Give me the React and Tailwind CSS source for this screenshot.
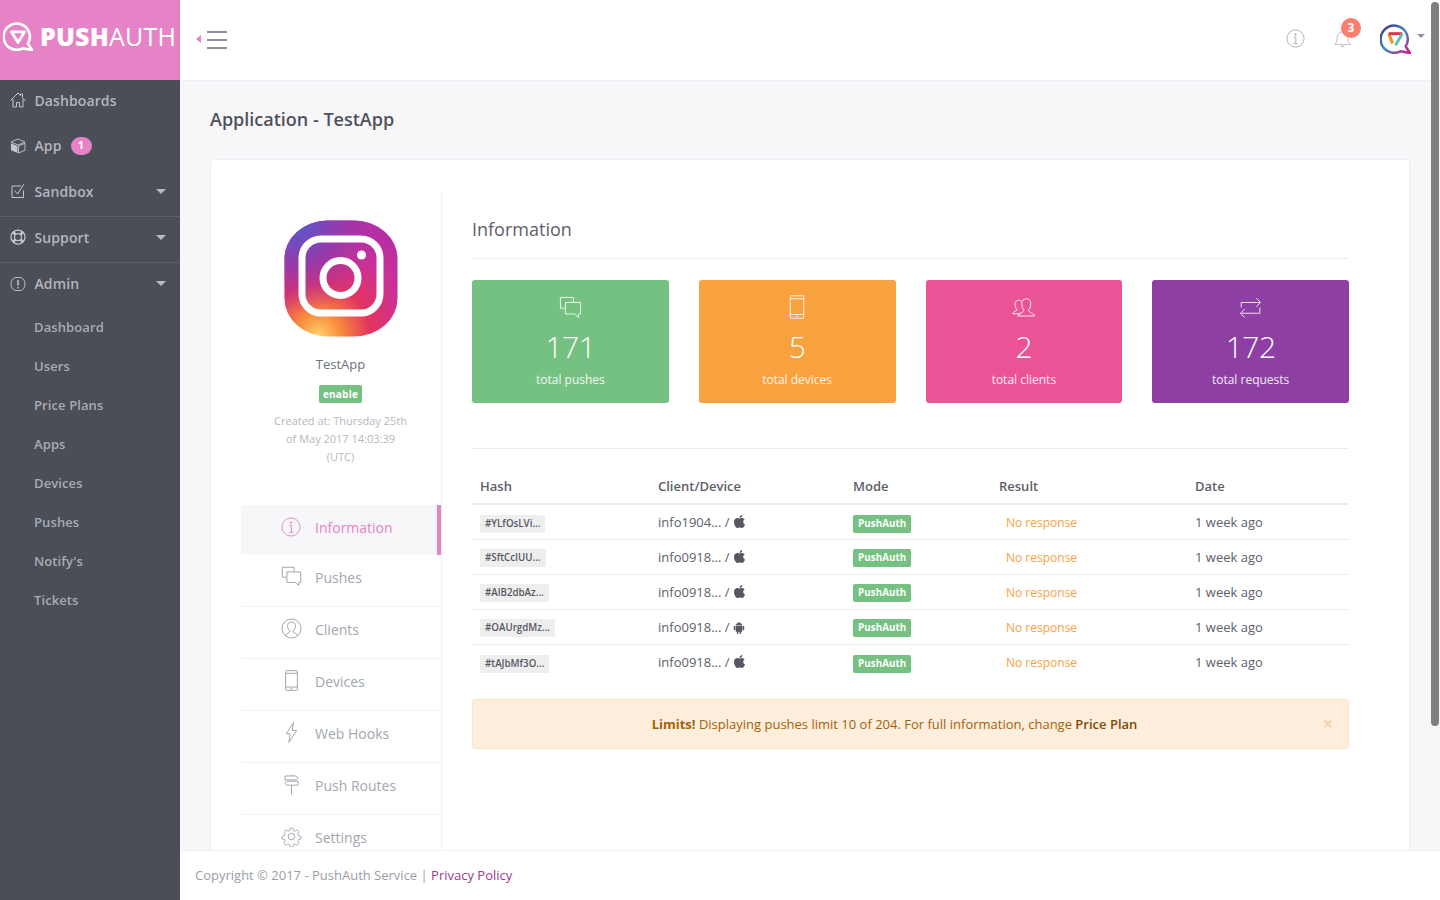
import { FaApple } from 'react-icons/fa';
import { AiFillAndroid } from 'react-icons/ai';

const Line = ({ children, size = 20, className = '', stroke = 1.5 }) => (
  <svg width={size} height={size} viewBox="0 0 32 32" fill="none" stroke="currentColor" strokeWidth={stroke} className={className}>
    {children}
  </svg>
);

const IconHome = (p) => (
  <Line {...p}><path d="M1 17 16 2l5 5V4h4v8l6 5" /><path d="M6 14v16h7v-9h6v9h7V14" /></Line>
);
const IconBox = (p) => (
  <svg width={p.size || 16} height={p.size || 16} viewBox="0 0 32 32" className={p.className}>
    <path d="M16 2 30 8 16 14 2 8z" fill="none" stroke="currentColor" strokeWidth="1.8" />
    <path d="M2 10.500 15 16v14L2 24.500z" fill="currentColor" />
    <path d="M30 10.500 17 16v14l13-5.500z" fill="none" stroke="currentColor" strokeWidth="1.8" />
  </svg>
);
const IconCheck = (p) => (
  <Line {...p}><path d="M27 15v14H4V6h18" /><path d="m9 15 6 7L28 2" /></Line>
);
const IconSupport = (p) => (
  <Line {...p}><circle cx="16" cy="16" r="14" strokeWidth="2.500" /><circle cx="16" cy="16" r="7" strokeWidth="2.500" /><path d="m6 6 5 5M26 6l-5 5M6 26l5-5M26 26l-5-5" strokeWidth="5" /></Line>
);
const IconAlert = (p) => (
  <Line {...p}><path d="M10 3C5 5 2 10 2 16s3 11 8 13h12c5-2 8-7 8-13S27 5 22 3z" strokeWidth="1.800" /><path d="M16 8v11" strokeWidth="3" /><path d="M16 22v3" strokeWidth="3" /></Line>
);
const IconInfo = (p) => (
  <Line {...p}><circle cx="16" cy="16" r="14.500" /><circle cx="16" cy="9" r="1.200" fill="currentColor" /><path d="M13 13.500h3.500V24M12.500 24.500h7.500" /></Line>
);
const IconChats = (p) => (
  <Line {...p}><path d="M20 9V2H2v15h7" /><path d="M9 9h21v16h-3v5l-5-5H9z" /></Line>
);
const IconUserCircle = (p) => (
  <Line {...p}><circle cx="16" cy="16" r="14.500" /><path d="M7 27c0-4 7-4 7-7-3-2-4-5-4-8 0-4 3-6 6-6s6 2 6 6c0 3-1 6-4 8 0 3 7 3 7 7" /></Line>
);
const IconPhone = (p) => (
  <Line {...p}><rect x="7" y="1" width="18" height="30" rx="1" /><path d="M7 5h18M7 26h18M14.500 28.500h3" /></Line>
);
const IconBolt = (p) => (
  <Line {...p}><path d="M19 1 8 18h6l-2 13 12-18h-7z" /></Line>
);
const IconSign = (p) => (
  <Line {...p}><path d="M6 3h17l3 3-3 3H6zM26 11H9l-3 3 3 3h17zM16 3V1M16 17v14" /></Line>
);
const IconGear = (p) => (
  <Line {...p}>
    <circle cx="16" cy="16" r="5" />
    <path d="M13.500 2h5l.8 4 2.700 1.200 3.500-2.300 3.500 3.500-2.300 3.500 1.200 2.700 4 .8v5l-4 .8-1.200 2.700 2.300 3.500-3.500 3.500-3.500-2.300-2.700 1.200-.8 4h-5l-.8-4-2.700-1.200-3.500 2.300-3.500-3.500 2.300-3.500-1.200-2.700-4-.8v-5l4-.8 1.200-2.700-2.300-3.500 3.500-3.500 3.500 2.300 2.700-1.200z" transform="translate(1.600 1.600) scale(.9)" />
  </Line>
);
const IconUsers = (p) => (
  <Line {...p}>
    <path d="M11 25H1c0-3 4-3 6-5-2-2-3-5-3-8 0-3 2-5 5-5 1 0 2 .3 3 1" />
    <path d="M8 28c0-4 8-4 8-8-2-2-3-5-3-9 0-4 3-6 6-6s6 2 6 6c0 4-1 7-3 9 0 4 8 4 8 8z" />
  </Line>
);
const IconRepeat = (p) => (
  <Line {...p}><path d="M3 16V9h26M24 3l6 6-6 6M29 16v8H3M8 18l-6 6 6 6" /></Line>
);
const IconBell = (p) => (
  <Line {...p}><path d="M3 26c3-3 4-6 4-12 0-6 4-9 9-9s9 3 9 9c0 6 1 9 4 12z" /><path d="M13 28c0 2 6 2 6 0" fill="currentColor" /></Line>
);

const Caret = ({ className = '' }) => (
  <span className={`w-0 h-0 border-x-[4px] border-x-transparent border-t-[4px] ${className}`} />
);

const bubble = 'M21 29.200 31 31 26.500 24.200A14 14 0 1 0 21 29.200Z';

const LogoMark = () => (
  <svg width="30" height="30" viewBox="0 0 32 32" fill="none" stroke="#fff">
    <path d={bubble} strokeWidth="2.800" strokeLinejoin="round" />
    <path d="M9 11.500h14L16 23z" strokeWidth="3" strokeLinejoin="round" />
  </svg>
);

const UserLogo = () => (
  <svg width="31" height="31" viewBox="0 0 32 32" fill="none">
    <defs>
      <linearGradient id="ul" x1="0" y1="0" x2="1" y2="1">
        <stop offset="0" stopColor="#3b2a87" />
        <stop offset=".5" stopColor="#3f8fc4" />
        <stop offset=".75" stopColor="#8e4ca0" />
        <stop offset="1" stopColor="#e0178a" />
      </linearGradient>
    </defs>
    <path d={bubble} stroke="url(#ul)" strokeWidth="2.600" strokeLinejoin="round" />
    <path d="M9 11 13 21" stroke="#f58c1f" strokeWidth="3" />
    <path d="M9 11h14" stroke="#e0304f" strokeWidth="3" />
    <path d="M23 11 16 23" stroke="#55c4b5" strokeWidth="3" />
  </svg>
);

const InstagramIcon = () => (
  <svg width="114" height="118" viewBox="0 0 114 118">
    <defs>
      <radialGradient id="ig1" cx="0.3" cy="1" r="1.1">
        <stop offset="0" stopColor="#fdd46f" />
        <stop offset=".18" stopColor="#f98d3c" />
        <stop offset=".42" stopColor="#e3335f" />
        <stop offset=".7" stopColor="#cc3195" />
        <stop offset="1" stopColor="#b32da6" />
      </radialGradient>
      <radialGradient id="ig2" cx="0.1" cy="0" r="0.8">
        <stop offset="0" stopColor="#4e5fd0" />
        <stop offset=".5" stopColor="#8a3cb0" stopOpacity=".8" />
        <stop offset="1" stopColor="#b32da6" stopOpacity="0" />
      </radialGradient>
    </defs>
    <rect x="0.500" y="0.500" width="113" height="116" rx="43" ry="38" fill="url(#ig1)" />
    <rect x="0.500" y="0.500" width="113" height="116" rx="43" ry="38" fill="url(#ig2)" />
    <rect x="18" y="19" width="78" height="74" rx="19" fill="none" stroke="#fff" strokeWidth="7" />
    <circle cx="56.500" cy="58" r="17.500" fill="none" stroke="#fff" strokeWidth="7" />
    <circle cx="77.500" cy="35" r="4.500" fill="#fff" />
  </svg>
);

const subItems = ['Dashboard', 'Users', 'Price Plans', 'Apps', 'Devices', 'Pushes', "Notify's", 'Tickets'];

const SideItem = ({ icon, label, badge, caret, border, short }) => (
  <div className={`flex items-center pl-[10px] pr-[15px] pb-[5px] ${short ? 'h-[45px]' : 'h-[46px]'} ${border ? 'border-b border-[#5b5f69]' : ''}`}>
    <span className="w-[24.500px] flex text-[#c4c6cb]">{icon}</span>
    <span className="text-[14px] font-semibold tracking-[0.1px] text-[#b4b6bd]">{label}</span>
    {badge && (
      <span className="ml-[9px] w-[21px] h-[18px] rounded-full bg-[#e683c6] text-white text-[11px] font-bold flex items-center justify-center">{badge}</span>
    )}
    {caret && <Caret className="ml-auto mr-[-1px] border-t-[#b9bbc1] border-x-[5px] border-t-[5px]" />}
  </div>
);

const Sidebar = () => (
  <aside className="w-[180px] shrink-0 flex flex-col bg-[#4a4e57]">
    <div className="h-[80px] bg-[#e683c6] flex items-center pl-[3px] pb-[8px] shrink-0">
      <LogoMark />
      <span className="ml-[7px] text-[25px] text-white tracking-[0.2px] leading-none">
        <span className="font-extrabold">PUSH</span>AUTH
      </span>
    </div>
    <nav className="flex flex-col">
      <SideItem short icon={<IconHome size={16} stroke={2} />} label="Dashboards" />
      <SideItem icon={<IconBox size={16} />} label="App" badge="1" />
      <SideItem icon={<IconCheck size={16} stroke={2} />} label="Sandbox" caret border />
      <SideItem icon={<IconSupport size={16} />} label="Support" caret border />
      <SideItem icon={<IconAlert size={16} />} label="Admin" caret />
      <ul className="mt-[-1px]">
        {subItems.map((s) => (
          <li key={s} className="h-[39px] pl-[34px] flex items-center text-[13px] font-semibold tracking-[0.1px] text-[#a9abb2]">{s}</li>
        ))}
      </ul>
    </nav>
  </aside>
);

const Header = () => (
  <header className="h-[81px] shrink-0 bg-white border-b border-[#f0f0f4] flex items-center pl-[16px] pr-[15px]">
    <span className="w-0 h-0 border-y-[4px] border-y-transparent border-r-[5px] border-r-[#e683c6] mr-[6px] mt-[-2px]" />
    <div className="flex flex-col gap-[6px] w-[20px]">
      <span className="h-[2px] bg-[#8e919b]" />
      <span className="h-[2px] bg-[#8e919b]" />
      <span className="h-[2px] bg-[#8e919b]" />
    </div>
    <div className="ml-auto flex items-center pb-[4px]">
      <IconInfo size={19} className="text-[#a9abb4]" />
      <div className="relative ml-[28px] mr-[28px] flex">
        <IconBell size={19} className="text-[#b7b9c0]" />
        <span className="absolute top-[-11px] left-[8px] w-[20px] h-[20px] rounded-full bg-[#fb7d6c] text-white text-[12px] font-bold flex items-center justify-center">3</span>
      </div>
      <UserLogo />
      <Caret className="ml-[6px] mt-[-4px] border-t-[#8e919b]" />
    </div>
  </header>
);

const sideLinks = [
  { label: 'Pushes', Icon: IconChats },
  { label: 'Clients', Icon: IconUserCircle },
  { label: 'Devices', Icon: IconPhone },
  { label: 'Web Hooks', Icon: IconBolt },
  { label: 'Push Routes', Icon: IconSign },
  { label: 'Settings', Icon: IconGear },
];

const ProfileColumn = () => (
  <div className="w-[201px] shrink-0 border-r border-[#f0f0f4] pt-[30px]">
    <div className="flex flex-col items-center pr-[1px]">
      <InstagramIcon />
      <p className="mt-[17px] text-[13px] leading-[18px] text-[#6f727d]">TestApp</p>
      <span className="mt-[12px] h-[18px] px-[4px] rounded-[2px] bg-[#75c181] text-white text-[10px] font-bold tracking-[0.2px] leading-[18px]">enable</span>
      <p className="mt-[9px] w-[135px] text-center text-[11px] leading-[18px] text-[#b5b7c0]">Created at: Thursday 25th of May 2017 14:03:39 (UTC)</p>
    </div>
    <div className="mt-[39px]">
      <div className="h-[50px] bg-[#f7f7fa] border-r-4 border-[#e683c6] flex items-center pl-[40px] pb-[6px] text-[#e683c6]">
        <IconInfo size={20} />
        <span className="ml-[14px] text-[14px]">Information</span>
      </div>
      {sideLinks.map(({ label, Icon }) => (
        <div key={label} className="h-[52px] border-b border-[#f0f0f4] flex items-center pl-[40px] pb-[7px] text-[#a3a6b0]">
          <Icon size={21} className="mt-[-1px]" />
          <span className="ml-[13px] text-[14px]">{label}</span>
        </div>
      ))}
    </div>
  </div>
);

const stats = [
  { value: '171', label: 'total pushes', bg: 'bg-[#75c181]', Icon: IconChats, size: 23 },
  { value: '5', label: 'total devices', bg: 'bg-[#f8a13f]', Icon: IconPhone, size: 24 },
  { value: '2', label: 'total clients', bg: 'bg-[#ea5395]', Icon: IconUsers, size: 24 },
  { value: '172', label: 'total requests', bg: 'bg-[#8d3fa4]', Icon: IconRepeat, size: 23 },
];

const rows = [
  { hash: '#YLfOsLVi...', client: 'info1904...', os: 'apple' },
  { hash: '#SftCcIUU...', client: 'info0918...', os: 'apple' },
  { hash: '#AlB2dbAz...', client: 'info0918...', os: 'apple' },
  { hash: '#OAUrgdMz...', client: 'info0918...', os: 'android' },
  { hash: '#tAJbMf3O...', client: 'info0918...', os: 'apple' },
];

const InfoColumn = () => (
  <div className="flex-1 min-w-0 pl-[30px] mr-[60px]">
    <h2 className="text-[18px] leading-[24px] text-[#5d606b] pb-[17px] border-b border-[#ebebf0] mt-[27px]">Information</h2>
    <div className="grid grid-cols-4 gap-[30px] mt-[21px]">
      {stats.map(({ value, label, bg, Icon, size }) => (
        <div key={label} className={`h-[123px] rounded-[3px] ${bg} text-white flex flex-col items-center pt-[15px]`}>
          <div className="h-[24px] flex items-center"><Icon size={size} stroke={1.3} className="text-white/90" /></div>
          <div className="mt-[10px] text-[30px] font-light leading-[36px] tracking-[-0.5px]">{value}</div>
          <div className="mt-[6px] text-[12px] leading-[18px] text-white/90">{label}</div>
        </div>
      ))}
    </div>
    <div className="mt-[45px] border-t border-[#ebebf0]" />
    <table className="w-full table-fixed mt-[21px] text-left">
      <colgroup>
        <col className="w-[178px]" />
        <col className="w-[195px]" />
        <col className="w-[146px]" />
        <col className="w-[196px]" />
        <col />
      </colgroup>
      <thead>
        <tr className="h-[34px] border-b-2 border-[#ebebf0] text-[13px] font-semibold text-[#5d606b]">
          {['Hash', 'Client/Device', 'Mode', 'Result', 'Date'].map((h) => (
            <th key={h} className="px-[8px] font-semibold">{h}</th>
          ))}
        </tr>
      </thead>
      <tbody>
        {rows.map((r, i) => (
          <tr key={r.hash} className={`h-[35px] text-[13px] text-[#5d606b] ${i < rows.length - 1 ? 'border-b border-[#ebebf0]' : ''}`}>
            <td className="px-[8px] pt-[2px]">
              <span className="inline-block bg-[#eeeeee] px-[5px] h-[18px] text-[9.750px] font-semibold leading-[18px] text-[#555862] align-middle">{r.hash}</span>
            </td>
            <td className="px-[8px] pt-[2px]">
              <span className="inline-flex items-center gap-[2px]">
                {r.client} / {r.os === 'apple' ? <FaApple size={15} className="text-[#555862] mt-[-2px]" /> : <AiFillAndroid size={14} className="text-[#555862]" />}
              </span>
            </td>
            <td className="px-[8px] pt-[2px]">
              <span className="inline-block bg-[#75c181] rounded-[2px] px-[5px] h-[18px] text-white text-[9.750px] font-bold tracking-[0.1px] leading-[18px] align-middle">PushAuth</span>
            </td>
            <td className="px-[8px] pt-[2px] text-[12px] text-[#f8a13f]">
              <span className="pl-[7px]">No response</span>
            </td>
            <td className="px-[8px] pt-[2px]">1 week ago</td>
          </tr>
        ))}
      </tbody>
    </table>
    <div className="relative mt-[20px] h-[50px] rounded-[3px] bg-[#feeedb] border border-[#fde4c6] pr-[32px] pt-[2px] flex items-center justify-center text-[13px] text-[#a5610a]">
      <span><b className="font-bold">Limits!</b> Displaying pushes limit 10 of 204. For full information, change <span className="font-semibold text-[#7d4a08]">Price Plan</span></span>
      <span className="absolute right-[15px] top-[11px] text-[18px] font-bold leading-[24px] text-[#f3d4ae]">×</span>
    </div>
  </div>
);

export default function App() {
  return (
    <div className="relative h-screen overflow-hidden flex font-['Open_Sans',sans-serif] bg-[#f7f7fa]">
      <Sidebar />
      <div className="flex-1 min-w-0 flex flex-col">
        <Header />
        <main className="flex-1 min-h-0 overflow-hidden px-[30px]">
          <h1 className="mt-[25px] text-[18px] leading-[27px] font-semibold text-[#4f525c]">Application - TestApp</h1>
          <div className="mt-[26px] h-[800px] rounded-[3px] bg-white border border-[#f0f0f4] flex pl-[30px] pt-[30px]">
            <ProfileColumn />
            <InfoColumn />
          </div>
        </main>
        <footer className="h-[50px] shrink-0 bg-white border-t border-[#f0f0f4] pl-[15px] flex items-center text-[13px] text-[#9a9da6]">
          Copyright © 2017 - PushAuth Service |&nbsp;<span className="text-[#9c3a90]">Privacy Policy</span>
        </footer>
      </div>
      {/* overlay scrollbar */}
      <div className="absolute top-[2px] right-[1px] w-[8px] h-[724px] rounded-full bg-[#7f7f7f]" />
    </div>
  );
}
